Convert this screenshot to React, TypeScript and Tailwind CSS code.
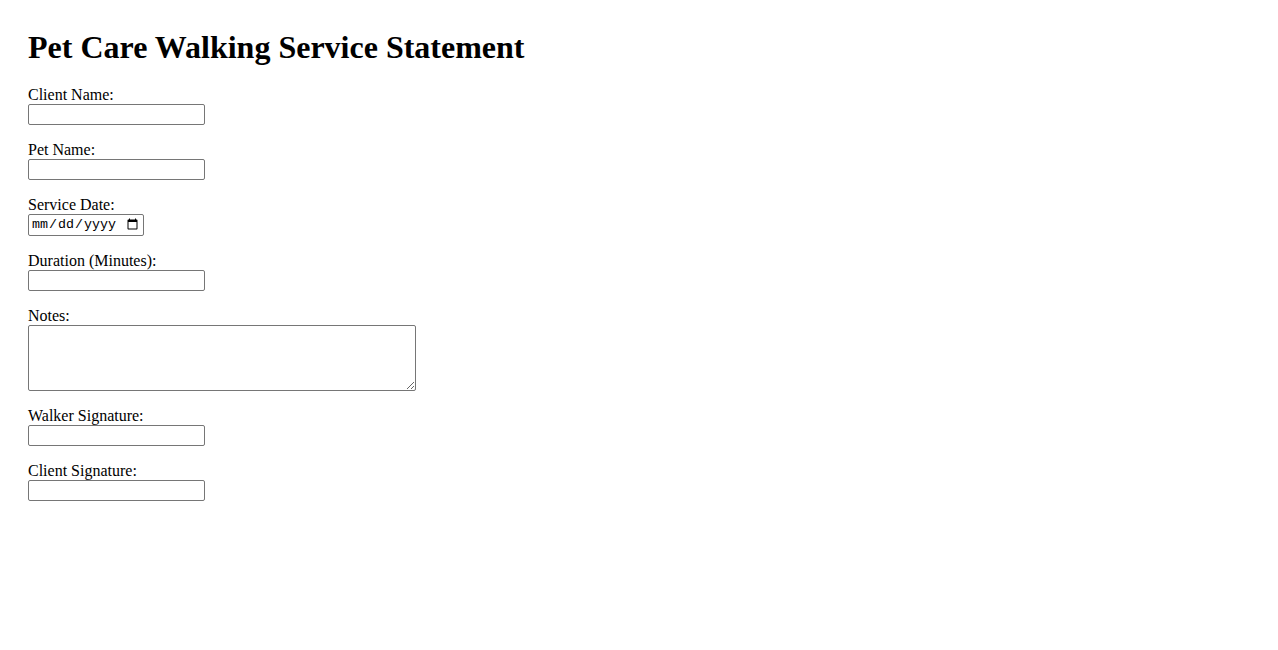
import React from "react";

const inputCls =
  "block w-[177px] h-[21px] border border-[#767676] rounded-[2px] px-[2px] py-[1px] text-[13.33px] bg-white";

function Field({ label, children }: { label: string; children: React.ReactNode }) {
  return (
    <div className="flex flex-col items-start mb-[17px]">
      <label className="block leading-[15px] mb-[2px] text-[16px]">{label}</label>
      {children}
    </div>
  );
}

export default function App() {
  return (
    <div
      className="min-h-[650px] bg-white text-black px-[28px] pt-[29px]"
      style={{ fontFamily: '"Liberation Serif", "Times New Roman", serif' }}
    >
      <h1 className="text-[32px] font-bold leading-[36.8px] mb-[21px]">
        Pet Care Walking Service Statement
      </h1>
      <form>
        <Field label="Client Name:">
          <input type="text" className={inputCls} />
        </Field>
        <Field label="Pet Name:">
          <input type="text" className={inputCls} />
        </Field>
        <Field label="Service Date:">
          <input
            type="date"
            className="block w-[116px] h-[22px] border border-[#767676] rounded-[2px] px-[2px] py-[1px] text-[13.33px] bg-white"
            style={{ fontFamily: '"Liberation Mono", "DejaVu Sans Mono", monospace' }}
          />
        </Field>
        <Field label="Duration (Minutes):">
          <input type="number" className={inputCls} />
        </Field>
        <Field label="Notes:">
          <textarea className="block w-[388px] h-[66px] border border-[#767676] rounded-[2px] px-[2px] py-[1px] text-[13.33px] bg-white" />
        </Field>
        <Field label="Walker Signature:">
          <input type="text" className={inputCls} />
        </Field>
        <Field label="Client Signature:">
          <input type="text" className={inputCls} />
        </Field>
      </form>
    </div>
  );
}
